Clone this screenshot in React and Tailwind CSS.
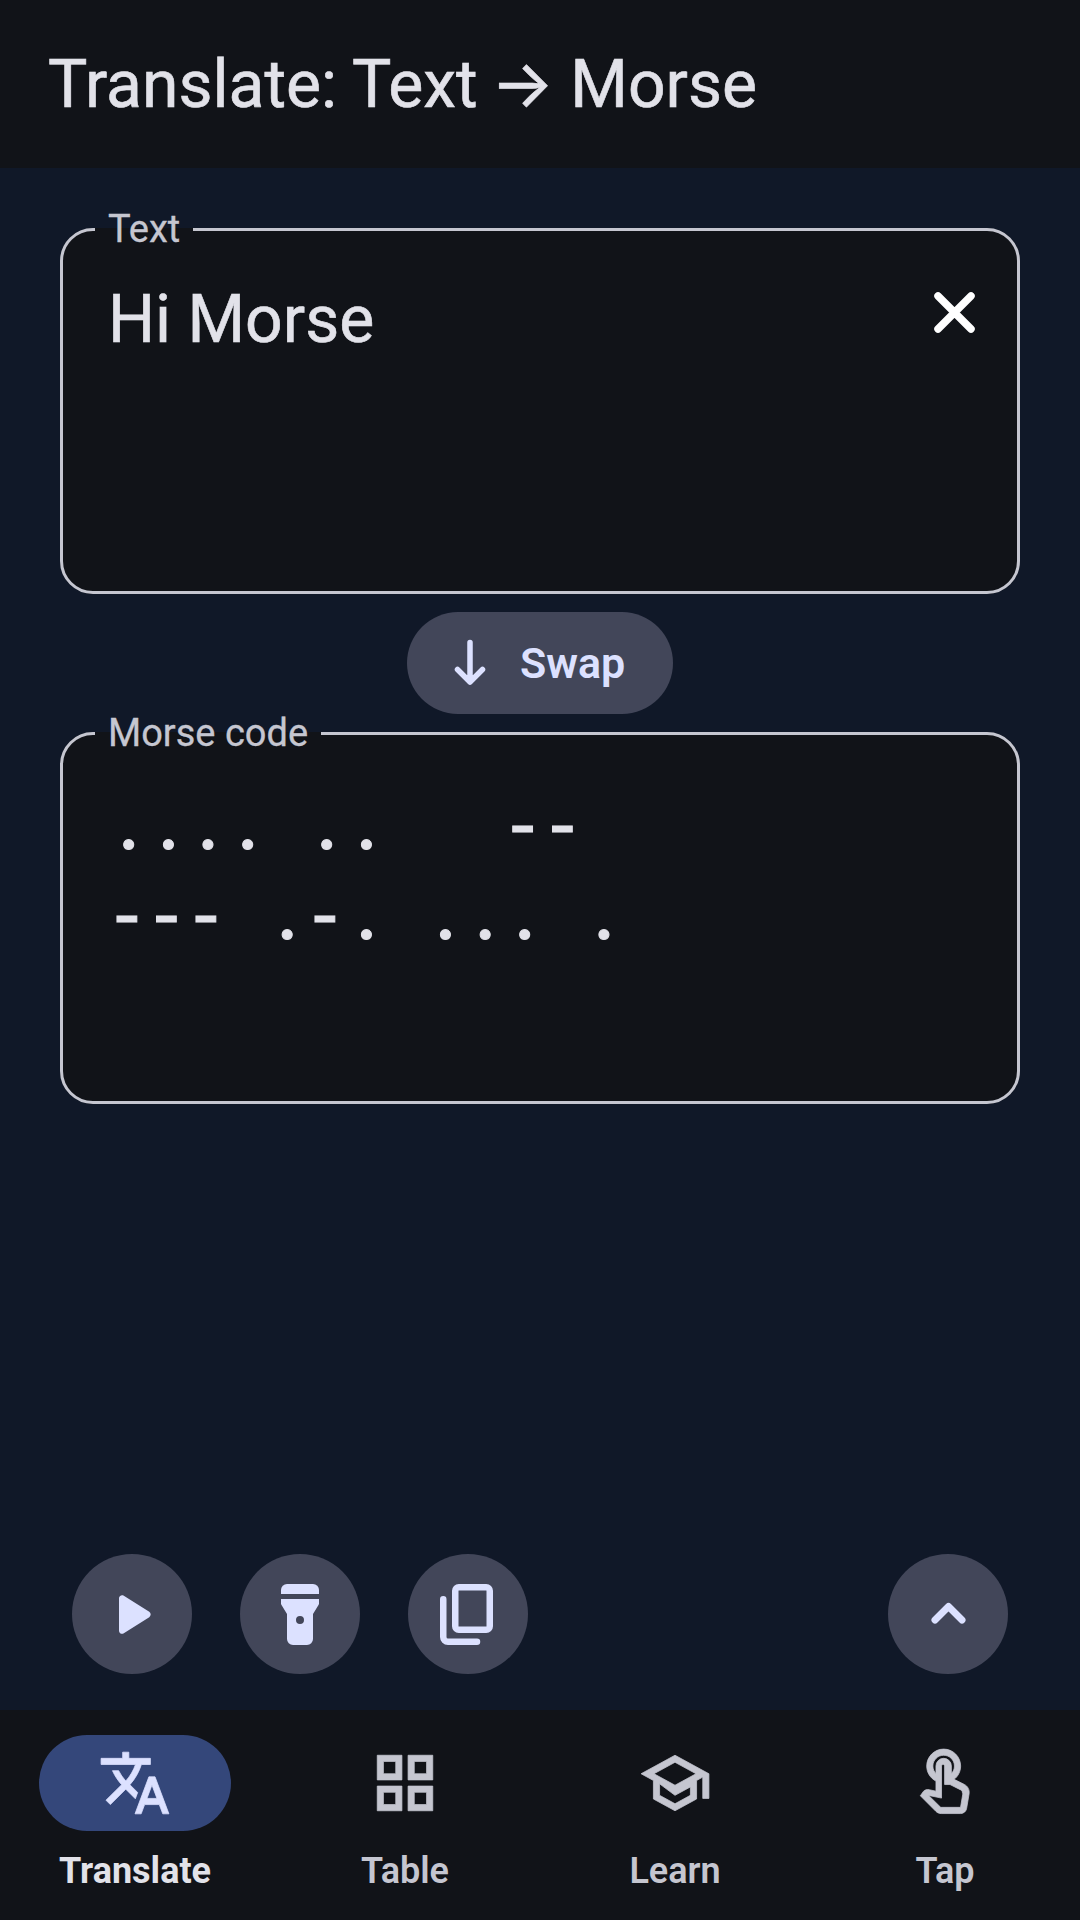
import React from "react";

const font = { fontFamily: "Roboto, sans-serif" };

function Icon({ d, size = 75, className = "", bold = 0 }) {
  return (
    <svg
      width={size}
      height={size}
      viewBox="0 0 24 24"
      fill="currentColor"
      stroke={bold ? "currentColor" : "none"}
      strokeWidth={bold}
      className={className}
    >
      <path d={d} />
    </svg>
  );
}

const paths = {
  play: "M8 6.82v10.36c0 .79.87 1.27 1.54.84l8.14-5.18c.62-.39.62-1.29 0-1.69L9.54 5.98C8.87 5.55 8 6.03 8 6.82z",
  translate:
    "M12.87 15.07l-2.54-2.51.03-.03c1.74-1.94 2.98-4.17 3.71-6.53H17V4h-7V2H8v2H1v1.99h11.17C11.5 7.92 10.44 9.75 9 11.35 8.07 10.32 7.3 9.19 6.69 8h-2c.73 1.63 1.73 3.17 2.98 4.56l-5.09 5.02L4 19l5-5 3.11 3.11.76-2.04zM18.5 10h-2L12 22h2l1.12-3h4.75L21 22h2l-4.5-12zm-2.62 7l1.62-4.33L19.12 17h-3.24z",
  grid: "M3 3v8h8V3H3zm6 6H5V5h4v4zm-6 4v8h8v-8H3zm6 6H5v-4h4v4zm4-16v8h8V3h-8zm6 6h-4V5h4v4zm-6 4v8h8v-8h-8zm6 6h-4v-4h4v4z",
  school:
    "M12 3L1 9l4 2.18v6L12 21l7-3.82v-6l2-1.09V17h2V9L12 3zm6.82 6L12 12.72 5.18 9 12 5.28 18.82 9zM17 15.99l-5 2.73-5-2.73v-3.72L12 16l5-2.73v3.72z",
  touch:
    "M18.19 12.44l-3.24-1.62c1.29-1 2.12-2.56 2.12-4.32 0-3.03-2.47-5.5-5.5-5.5s-5.5 2.47-5.5 5.5c0 2.13 1.22 3.98 3 4.89v3.26l-2.15-.46c-.17-.03-.34-.05-.53-.05-.53 0-1.03.21-1.4.59L4 16.14l5.09 5.09c.43.44 1.03.68 1.65.68h6.3c.98 0 1.81-.7 1.97-1.67l.8-4.71c.22-1.3-.43-2.58-1.62-3.08zm-.35 2.75l-.8 4.71h-6.3c-.09 0-.17-.04-.24-.11L6.7 16.02l4.17.88V6.5c0-.28.22-.5.5-.5s.5.22.5.5v6h1.76l3.46 1.73c.4.18.62.6.55 1.06zM8.07 6.5c0-1.93 1.57-3.5 3.5-3.5s3.5 1.57 3.5 3.5c0 .95-.38 1.81-1 2.44V6.5a2.5 2.5 0 0 0-5 0v2.44c-.62-.63-1-1.49-1-2.44z",
};

function Stroked({ d, size = 75, width }) {
  return (
    <svg
      width={size}
      height={size}
      viewBox={`0 0 ${size} ${size}`}
      fill="none"
      stroke="currentColor"
      strokeWidth={width}
      strokeLinecap="round"
      strokeLinejoin="round"
    >
      <path d={d} />
    </svg>
  );
}

function Flashlight() {
  return (
    <svg width="38" height="61" viewBox="0 0 38 61" fill="currentColor">
      <path d="M0 6a6 6 0 0 1 6-6h26a6 6 0 0 1 6 6v4H0z" />
      <path
        fillRule="evenodd"
        d="M0 15h38v4.5a3 3 0 0 1-.5 1.6L32 30v25a6 6 0 0 1-6 6H12a6 6 0 0 1-6-6V30L.5 21.1a3 3 0 0 1-.5-1.6zM19 32a4 4 0 1 0 0 8 4 4 0 0 0 0-8z"
      />
    </svg>
  );
}

function CopyIcon() {
  return (
    <svg width="53" height="61" viewBox="0 0 53 61" fill="none" stroke="currentColor" strokeWidth="6.5" className="ml-[-3px]">
      <rect x="15.25" y="3.25" width="34.5" height="42.5" rx="3.5" />
      <path d="M3.25 15.25V53a4.75 4.75 0 0 0 4.75 4.75H37" strokeLinecap="round" />
    </svg>
  );
}

function Field({ label, height, children }) {
  return (
    <fieldset
      className={`mx-[60px] border-[3px] border-[#c5c6d0] rounded-[33px] bg-[#111318] px-[46px] min-w-0 ${height}`}
    >
      <legend className="ml-[-14px] pl-[13px] pr-[13px] text-[38px] leading-[46px] text-[#c5c6d0] [-webkit-text-stroke:0.3px_#c5c6d0]">
        {label}
      </legend>
      {children}
    </fieldset>
  );
}

function Fab({ children, className = "" }) {
  return (
    <button className={`w-[120px] h-[120px] rounded-full bg-[#424659] text-[#dce1ff] flex items-center justify-center ${className}`}>
      {children}
    </button>
  );
}

// each symbol sits in its own fixed cell, like a monospace font
function MorseLine({ text }) {
  return (
    <div
      className="h-[90px] flex text-[80px] leading-[90px] text-[#e2e2e9] [-webkit-text-stroke:1px_#e2e2e9]"
      style={{ fontFamily: "Lato, sans-serif" }}
    >
      {text.split("").map((ch, i) => (
        <span
          key={i}
          className={`w-[39.6px] shrink-0 text-center ${ch === "-" ? "-translate-x-[2px] translate-y-[4px]" : ""}`}
        >
          {ch}
        </span>
      ))}
    </div>
  );
}

const navItems = [
  { label: "Translate", icon: paths.translate, active: true },
  { label: "Table", icon: paths.grid },
  { label: "Learn", icon: paths.school },
  { label: "Tap", icon: paths.touch },
];

export default function App() {
  return (
    <div style={font} className="w-[1080px] h-[1920px] flex flex-col bg-[#101828] overflow-hidden">
      {/* Header */}
      <header className="h-[168px] shrink-0 bg-[#111318] flex items-center px-[48px]">
        <h1 className="text-[66px] font-normal text-[#e2e2e9] leading-none whitespace-pre [-webkit-text-stroke:0.6px_#e2e2e9]">
          Translate: Text <span className="ml-[-3px]" style={{ fontFamily: "Inter, sans-serif" }}>→</span> Morse
        </h1>
      </header>

      {/* Content */}
      <main className="flex-1 flex flex-col pt-[38px]">
        <Field label="Text" height="h-[388px]">
          <div className="flex justify-between items-start">
            <span className="text-[66px] leading-[88px] text-[#e2e2e9] mt-[24px] ml-[-1px] [-webkit-text-stroke:0.6px_#e2e2e9]">
              Hi Morse
            </span>
            <div className="text-white mt-[23px] mr-[-21px]">
              <Stroked size={75} width={7.5} d="M21 21L54 54M54 21L21 54" />
            </div>
          </div>
        </Field>

        <div className="flex justify-center mt-[18px] shrink-0">
          <button className="h-[102px] w-[266px] rounded-full bg-[#424659] text-[#dce1ff] flex items-center pl-[30px] gap-[16px]">
            <Stroked size={66} width={5.5} d="M33 12.5V52M20.5 39.5L33 52L45.5 39.5" />
            <span className="text-[43px] font-semibold ml-[1px] mt-[1px]">Swap</span>
          </button>
        </div>

        <Field label="Morse code" height="h-[394px] mt-[-4px]">
          <div className="mt-[17px]">
            <MorseLine text=".... ..   --" />
            <MorseLine text="--- .-. ... ." />
          </div>
        </Field>

        {/* Action buttons */}
        <div className="mt-auto mb-[36px] px-[72px] flex gap-[48px]">
          <Fab>
            <Icon d={paths.play} className="ml-[-1px]" />
          </Fab>
          <Fab>
            <Flashlight />
          </Fab>
          <Fab>
            <CopyIcon />
          </Fab>
          <Fab className="ml-auto">
            <Stroked size={75} width={7} d="M24 43L37.5 29.5L51 43" />
          </Fab>
        </div>
      </main>

      {/* Bottom navigation */}
      <nav className="h-[210px] shrink-0 bg-[#111318] grid grid-cols-4">
        {navItems.map((item) => (
          <div key={item.label} className="flex flex-col items-center pt-[25px]">
            <div
              className={`w-[192px] h-[96px] rounded-full flex items-center justify-center ${
                item.active ? "bg-[#34477a] text-[#dce1ff]" : "text-[#c5c6d0]"
              }`}
            >
              <Icon d={item.icon} size={74} bold={0.25} />
            </div>
            <span
              className={`mt-[15px] text-[36px] leading-[50px] ${
                item.active ? "font-bold text-[#e2e2e9]" : "font-semibold text-[#c5c6d0]"
              }`}
            >
              {item.label}
            </span>
          </div>
        ))}
      </nav>
    </div>
  );
}
